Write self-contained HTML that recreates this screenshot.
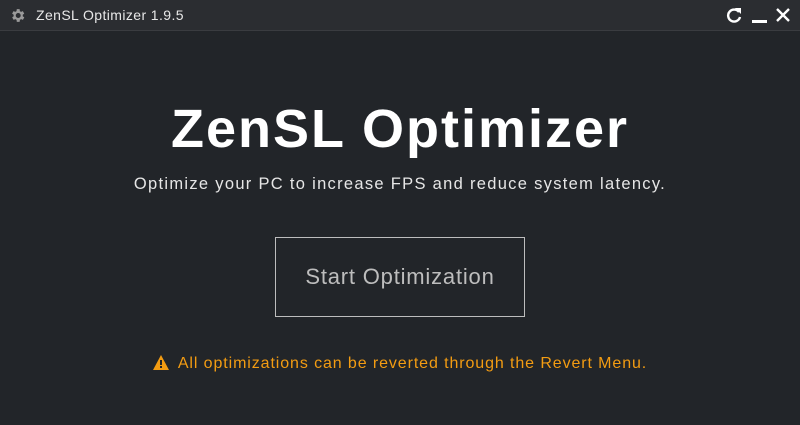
<!DOCTYPE html>
<html><head><style>
html,body{margin:0;padding:0;width:800px;height:425px;overflow:hidden;background:#222529;font-family:"Liberation Sans",sans-serif;}
.bar{position:absolute;left:0;top:0;width:800px;height:30px;background:#2b2d31;border-bottom:1px solid #3a3c40;}
.bar .t{position:absolute;left:36px;top:7px;color:#e8e8e8;font-size:14px;letter-spacing:0.4px;}
.c{position:absolute;left:0;width:800px;text-align:center;white-space:nowrap;}
h1{margin:0;position:absolute;top:98px;left:0;width:800px;text-align:center;color:#fff;font-size:54px;font-weight:bold;letter-spacing:2px;}
.sub{top:175px;color:#e6e6e6;font-size:16.5px;letter-spacing:1.3px;}
.btn{position:absolute;left:275px;top:237px;width:248px;height:78px;border:1px solid #bdbdbd;color:#bdbdbd;font-size:22px;letter-spacing:0.8px;text-align:center;line-height:78px;box-sizing:content-box;}
.warn{top:355px;color:#f39c12;font-size:16px;letter-spacing:0.9px;}
</style></head><body>
<div class="bar">
<svg style="position:absolute;left:9px;top:7px" width="17" height="17" viewBox="0 0 24 24"><path fill="#9a9a9a" d="M19.4 13a7.5 7.5 0 000-2l2.1-1.6-2-3.5-2.5 1a7.5 7.5 0 00-1.7-1L15 3h-4l-.4 2.9a7.5 7.5 0 00-1.7 1l-2.5-1-2 3.5L6.6 11a7.5 7.5 0 000 2l-2.1 1.6 2 3.5 2.5-1a7.5 7.5 0 001.7 1L11 21h4l.4-2.9a7.5 7.5 0 001.7-1l2.5 1 2-3.5zM13 15.5a3.5 3.5 0 110-7 3.5 3.5 0 010 7z"/></svg>
<div class="t">ZenSL Optimizer 1.9.5</div>
<svg style="position:absolute;left:725px;top:6px" width="18" height="18" viewBox="0 0 18 18"><path d="M14 6A6 6 0 1 0 15 11" fill="none" stroke="#fff" stroke-width="2.4"/><path d="M10 2h6v6z" fill="#fff"/></svg>
<div style="position:absolute;left:752px;top:20px;width:15px;height:2.5px;background:#fff"></div>
<svg style="position:absolute;left:776px;top:8px" width="14" height="14" viewBox="0 0 14 14"><path d="M1 1L13 13M13 1L1 13" stroke="#fff" stroke-width="2.4"/></svg>
</div>
<h1>ZenSL Optimizer</h1>
<div class="c sub">Optimize your PC to increase FPS and reduce system latency.</div>
<div class="btn">Start Optimization</div>
<div class="c warn"><svg width="16" height="15" viewBox="0 0 16 15" style="vertical-align:-2px;margin-right:9px"><path d="M8 0L16 15H0z" fill="#f39c12"/><rect x="7" y="5" width="2" height="5" fill="#222529"/><rect x="7" y="11" width="2" height="2" fill="#222529"/></svg>All optimizations can be reverted through the Revert Menu.</div>
</body></html>
